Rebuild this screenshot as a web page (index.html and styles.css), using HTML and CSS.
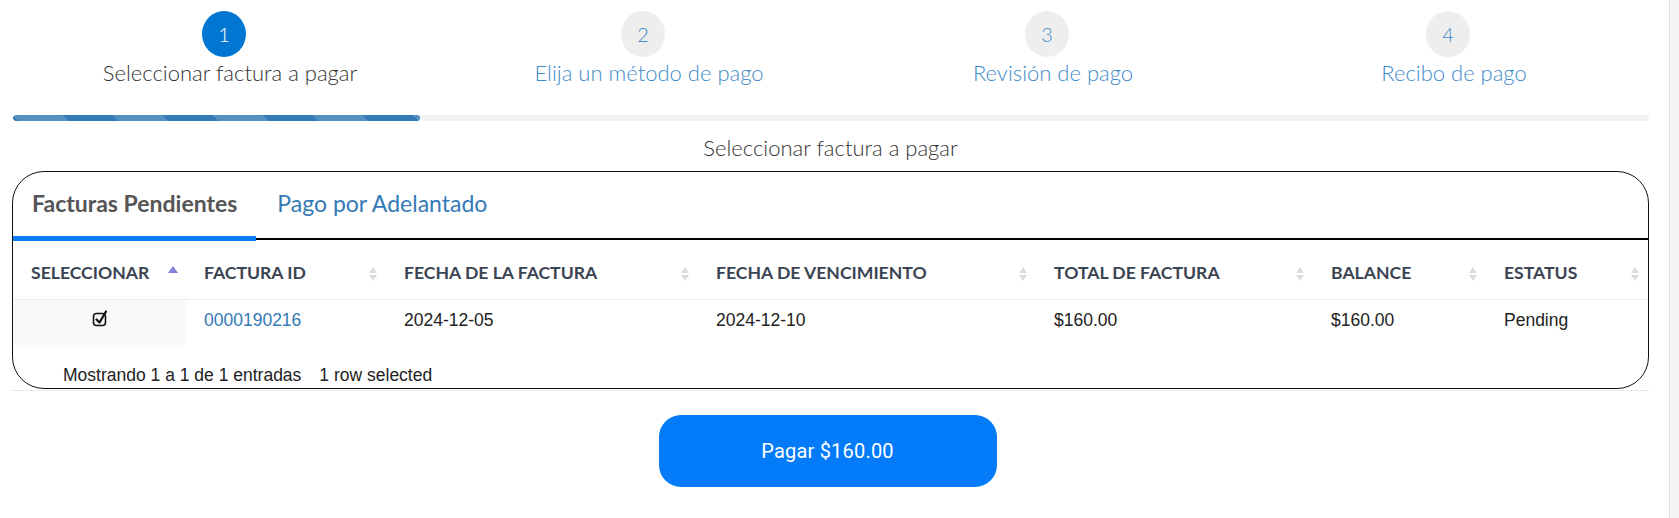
FILE: index.html
```html
<!DOCTYPE html>
<html lang="es">
<head>
<meta charset="utf-8">
<title>Pagar factura</title>
<link rel="stylesheet" href="styles.css">
</head>
<body>
<div class="page">
  <div class="main">
    <div class="steps">
      <div class="step active"><div class="num">1</div><div class="label">Seleccionar factura a pagar</div></div>
      <div class="step"><div class="num">2</div><div class="label">Elija un método de pago</div></div>
      <div class="step"><div class="num">3</div><div class="label">Revisión de pago</div></div>
      <div class="step"><div class="num">4</div><div class="label">Recibo de pago</div></div>
    </div>
    <div class="content">
      <div class="progress"><div class="progress-bar" style="width:24.9%"></div></div>
      <div class="subtitle">Seleccionar factura a pagar</div>
      <div class="card">
        <div class="tabs">
          <div class="tab active">Facturas Pendientes</div>
          <div class="tab">Pago por Adelantado</div>
        </div>
        <table class="invoices">
          <colgroup>
            <col class="c1"><col class="c2"><col class="c3"><col class="c4"><col class="c5"><col class="c6"><col class="c7">
          </colgroup>
          <thead>
            <tr>
              <th class="sort-asc">SELECCIONAR</th>
              <th class="sort-both">FACTURA ID</th>
              <th class="sort-both">FECHA DE LA FACTURA</th>
              <th class="sort-both">FECHA DE VENCIMIENTO</th>
              <th class="sort-both">TOTAL DE FACTURA</th>
              <th class="sort-both">BALANCE</th>
              <th class="sort-both">ESTATUS</th>
            </tr>
          </thead>
          <tbody>
            <tr>
              <td class="select-cell"><svg class="checkbox" width="18" height="18" viewBox="0 0 18 18" aria-hidden="true"><rect x="1.5" y="4.5" width="12" height="12" rx="3" fill="#f4f4f4" stroke="#111" stroke-width="1.6"/><path d="M4.5 10.5 L7.5 13.5 L14 2.5" fill="none" stroke="#111" stroke-width="2.2" stroke-linecap="round" stroke-linejoin="round"/></svg></td>
              <td><a class="link" href="#">0000190216</a></td>
              <td>2024-12-05</td>
              <td>2024-12-10</td>
              <td>$160.00</td>
              <td>$160.00</td>
              <td>Pending</td>
            </tr>
          </tbody>
        </table>
        <div class="info">Mostrando 1 a 1 de 1 entradas<span class="select-info">1 row selected</span></div>
      </div>
      <div class="rule"></div>
    </div>
    <div class="actions"><button class="pay" type="button">Pagar $160.00</button></div>
  </div>
  <div class="scrollbar"></div>
</div>
</body>
</html>
```

FILE: styles.css
```css
html, body {
  margin: 0;
  padding: 0;
  background: #fff;
}

body {
  font-family: Lato, "Open Sans", sans-serif;
  color: #333;
}

.page {
  display: flex;
  width: 1679px;
  height: 518px;
  overflow: hidden;
}

.main {
  width: 1655px;
  flex: none;
}

.scrollbar {
  flex: 1;
  border-left: 14px solid #fff;
  background: #f3f3f3;
  box-shadow: inset 1px 0 0 #dedede;
}

/* steps */
.steps {
  display: grid;
  grid-template-columns: 448px 390px 418px 384px;
  padding-top: 11px;
}

.step {
  display: flex;
  flex-direction: column;
  align-items: center;
}

.num {
  width: 44px;
  height: 46px;
  border-radius: 50%;
  background: #eeeeee;
  color: #428bca;
  font-weight: 300;
  font-size: 20px;
  line-height: 46px;
  text-align: center;
}

.label {
  margin-top: 2px;
  padding-left: 12px;
  font-size: 22px;
  font-weight: 300;
  line-height: 28px;
  color: #428bca;
  white-space: nowrap;
}

.step.active .num {
  background: #0277d2;
  color: #fff;
}

.step.active .label {
  color: #333;
}

/* content */
.content {
  padding: 0 6px 0 12px;
}

.progress {
  margin: 28px 0 0 1px;
  height: 6px;
  border-radius: 4px;
  background: #f3f3f3;
  overflow: hidden;
}

.progress-bar {
  height: 6px;
  border-radius: 4px;
  background-color: #337ab7;
  background-image: linear-gradient(45deg, rgba(255,255,255,.17) 25%, transparent 25%, transparent 50%, rgba(255,255,255,.17) 50%, rgba(255,255,255,.17) 75%, transparent 75%, transparent);
  background-size: 100px 100px;
}

.subtitle {
  margin-top: 13px;
  text-align: center;
  font-size: 22px;
  font-weight: 300;
  line-height: 28px;
  color: #333;
}

.card {
  margin-top: 9px;
  border: 1px solid #111;
  border-radius: 32px;
  overflow: hidden;
}

.tabs {
  display: flex;
  position: relative;
  border-bottom: 2px solid #000;
}

.tab {
  position: relative;
  padding: 16px 19px 20px 19px;
  font-size: 23px;
  line-height: 30px;
  color: #337ab7;
}

.tab.active {
  font-weight: 700;
  color: #555;
}

.tab.active::after {
  content: "";
  position: absolute;
  left: 0;
  right: 0;
  bottom: -3px;
  height: 5px;
  background: #0a7bf0;
}

.tab + .tab {
  padding-left: 21px;
}

/* table */
.invoices {
  width: 100%;
  table-layout: fixed;
  border-collapse: collapse;
}

.c1 { width: 173px; }
.c2 { width: 200px; }
.c3 { width: 312px; }
.c4 { width: 338px; }
.c5 { width: 277px; }
.c6 { width: 173px; }
.c7 { width: 162px; }

.invoices th {
  position: relative;
  padding: 22px 18px 15px;
  text-align: left;
  font-family: Lato, sans-serif;
  font-weight: 700;
  font-size: 17.6px;
  line-height: 22px;
  color: #3b4453;
  white-space: nowrap;
  border-bottom: 1px solid #eeeeee;
}

.sort-both::before,
.sort-both::after,
.sort-asc::before {
  content: "";
  position: absolute;
  right: 9px;
  width: 0;
  height: 0;
  border-left: 4px solid transparent;
  border-right: 4px solid transparent;
}

.sort-both::before {
  top: calc(50% - 3px);
  border-bottom: 6px solid #dcdcdc;
}

.sort-both::after {
  top: calc(50% + 5px);
  border-top: 6px solid #dcdcdc;
}

.sort-asc::before {
  right: 8px;
  top: calc(50% - 4px);
  border-left-width: 5px;
  border-right-width: 5px;
  border-bottom: 7px solid #7f7fdc;
}

.invoices td {
  padding: 9px 18px 14px;
  font-family: "Liberation Sans", Arial, sans-serif;
  font-size: 17.5px;
  line-height: 22px;
  color: #222;
  white-space: nowrap;
}

.invoices td.select-cell {
  background: #f9f9fa;
  text-align: center;
}

.checkbox {
  display: inline-block;
  vertical-align: -1px;
  margin-left: 2px;
}

.link {
  color: #337ab7;
  text-decoration: none;
}

.info {
  padding: 19px 0 2px 50px;
  font-family: "Liberation Sans", Arial, sans-serif;
  font-size: 17.5px;
  line-height: 22px;
  color: #222;
}

.select-info {
  margin-left: 18px;
}

.rule {
  margin-top: 1px;
  height: 1px;
  background: #e8e8e8;
}

.actions {
  display: flex;
  justify-content: center;
  margin-top: 24px;
}

.pay {
  width: 338px;
  height: 72px;
  border: none;
  border-radius: 22px;
  background: #047bf8;
  color: #fff;
  font-family: Roboto, sans-serif;
  font-size: 20px;
  letter-spacing: 0.2px;
  cursor: pointer;
}
```
